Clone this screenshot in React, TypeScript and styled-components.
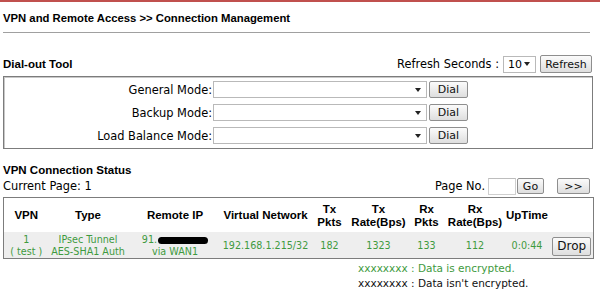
import React from 'react';
import styled, { createGlobalStyle } from 'styled-components';

const GlobalStyle = createGlobalStyle`
  html, body {
    margin: 0;
    padding: 0;
    background: #ffffff;
  }
  body {
    font-family: "DejaVu Sans", Verdana, sans-serif;
    font-size: 11.4px;
    color: #000;
  }
`;

const Page = styled.div`
  width: 600px;
  height: 296px;
  overflow: hidden;
  border-top: 2px solid #c0504d;
  box-sizing: border-box;
`;

const Title = styled.div`
  margin: 0 10px 0 3px;
  padding: 9px 0 7px 0;
  font-family: "Liberation Sans", Arial, sans-serif;
  font-weight: bold;
  font-size: 11.3px;
  line-height: 14px;
  border-bottom: 1px solid #a0a0a0;
`;

const SectionBar = styled.div`
  display: flex;
  align-items: center;
  justify-content: space-between;
  margin: 21px 8px 2px 3px;
  height: 20px;
`;

const Heading = styled.span`
  font-family: "Liberation Sans", Arial, sans-serif;
  font-weight: bold;
  font-size: 11.5px;
`;

const Inline = styled.div`
  display: flex;
  align-items: center;
  gap: 4px;
`;

const SelectBox = styled.div<{ $w: number }>`
  width: ${(p) => p.$w}px;
  height: 17px;
  box-sizing: border-box;
  border: 1px solid #b9b9b9;
  background: #fff;
  display: flex;
  align-items: center;
  justify-content: space-between;
  padding: 0 5px 0 4px;
  font-size: 11px;
`;

const Arrow = styled.span`
  width: 0;
  height: 0;
  border-left: 3px solid transparent;
  border-right: 3px solid transparent;
  border-top: 4px solid #222;
`;

const Btn = styled.button<{ $w: number; $h?: number; $fs?: number; $ml?: number }>`
  width: ${(p) => p.$w}px;
  height: ${(p) => p.$h ?? 17}px;
  margin-left: ${(p) => p.$ml ?? 0}px;
  padding: 0;
  box-sizing: border-box;
  border: 1px solid #8e8e8e;
  border-radius: 2px;
  background: linear-gradient(#fbfbfb, #dedede);
  font-family: "DejaVu Sans", Verdana, sans-serif;
  font-size: ${(p) => p.$fs ?? 11}px;
  color: #111;
`;

const DialBox = styled.div`
  margin: 0 7px 0 3px;
  border: 1px solid #7c7c7c;
  box-shadow: inset 1px 1px 0 #c8c8c8;
  padding: 4px 0 4px 0;
  display: grid;
  grid-template-columns: 208px auto;
  row-gap: 6px;
`;

const DialLabel = styled.div`
  text-align: right;
  align-self: center;
  white-space: nowrap;
`;

const DialControls = styled.div`
  display: flex;
  align-items: center;
  gap: 2px;
  margin-left: 1px;
`;

const StatusHead = styled.div`
  margin: 13px 0 0 3px;
  height: 15px;
  display: flex;
  align-items: center;
`;

const PageBar = styled.div`
  display: flex;
  align-items: center;
  justify-content: space-between;
  margin: 0 10px 2px 3px;
  height: 18px;
`;

const Pager = styled.div`
  display: flex;
  align-items: center;
`;

const PageInput = styled.div`
  width: 28px;
  height: 17px;
  box-sizing: border-box;
  border: 1px solid #cfcfcf;
  border-top-color: #bdbdbd;
  background: #fff;
  margin-left: 3px;
`;

const Table = styled.table`
  margin-left: 3px;
  width: 590px;
  table-layout: fixed;
  border-collapse: collapse;
  border: 1px solid #7c7c7c;
`;

const Th = styled.th`
  font-family: "Liberation Sans", Arial, sans-serif;
  font-weight: bold;
  font-size: 11.5px;
  text-align: center;
  white-space: nowrap;
  padding: 1px 0 0 0;
  height: 33px;
  line-height: 13px;
`;

const DataRow = styled.tr`
  background: #eeeeee;
`;

const Td = styled.td`
  color: #3e9a3e;
  font-size: 9.6px;
  text-align: center;
  white-space: nowrap;
  line-height: 12px;
  padding: 2px 0 0 0;
  height: 23px;
`;

const Masked = styled.span`
  display: inline-block;
  width: 50px;
  height: 7px;
  border-radius: 4px;
  background: #000;
  vertical-align: middle;
  margin-left: 1px;
`;

const Legend = styled.div`
  margin: 2px 0 0 358px;
  line-height: 15px;
  font-size: 10.5px;
`;

const LegendLine = styled.div<{ $green?: boolean }>`
  color: ${(p) => (p.$green ? '#3e9a3e' : '#111')};
`;

const cols = [45, 79, 95, 86, 42, 56, 40, 57, 47, 43];

const dialModes = ['General Mode:', 'Backup Mode:', 'Load Balance Mode:'];

const App: React.FC = () => {
  return (
    <Page>
      <GlobalStyle />
      <Title>VPN and Remote Access &gt;&gt; Connection Management</Title>

      <SectionBar>
        <Heading>Dial-out Tool</Heading>
        <Inline>
          <span>Refresh Seconds :</span>
          <SelectBox $w={33}>
            <span>10</span>
            <Arrow />
          </SelectBox>
          <Btn $w={52} $h={18}>Refresh</Btn>
        </Inline>
      </SectionBar>

      <DialBox>
        {dialModes.map((m) => (
          <React.Fragment key={m}>
            <DialLabel>{m}</DialLabel>
            <DialControls>
              <SelectBox $w={214}>
                <span />
                <Arrow />
              </SelectBox>
              <Btn $w={39}>Dial</Btn>
            </DialControls>
          </React.Fragment>
        ))}
      </DialBox>

      <StatusHead>
        <Heading>VPN Connection Status</Heading>
      </StatusHead>
      <PageBar>
        <span>Current Page: 1</span>
        <Pager>
          <span>Page No.</span>
          <PageInput />
          <Btn $w={27} $h={16} $ml={1}>Go</Btn>
          <Btn $w={33} $h={16} $ml={13}>&gt;&gt;</Btn>
        </Pager>
      </PageBar>

      <Table>
        <colgroup>
          {cols.map((w, i) => (
            <col key={i} style={{ width: w }} />
          ))}
        </colgroup>
        <thead>
          <tr>
            <Th>VPN</Th>
            <Th>Type</Th>
            <Th>Remote IP</Th>
            <Th>Virtual Network</Th>
            <Th>Tx<br />Pkts</Th>
            <Th>Tx<br />Rate(Bps)</Th>
            <Th>Rx<br />Pkts</Th>
            <Th>Rx<br />Rate(Bps)</Th>
            <Th>UpTime</Th>
            <Th />
          </tr>
        </thead>
        <tbody>
          <DataRow>
            <Td>1<br />( test )</Td>
            <Td>IPsec Tunnel<br />AES-SHA1 Auth</Td>
            <Td>91.<Masked /><br />via WAN1</Td>
            <Td>192.168.1.215/32</Td>
            <Td>182</Td>
            <Td>1323</Td>
            <Td>133</Td>
            <Td>112</Td>
            <Td>0:0:44</Td>
            <Td>
              <Btn $w={39} $h={19} $fs={12}>Drop</Btn>
            </Td>
          </DataRow>
        </tbody>
      </Table>

      <Legend>
        <LegendLine $green>xxxxxxxx : Data is encrypted.</LegendLine>
        <LegendLine>xxxxxxxx : Data isn't encrypted.</LegendLine>
      </Legend>
    </Page>
  );
};

export default App;
